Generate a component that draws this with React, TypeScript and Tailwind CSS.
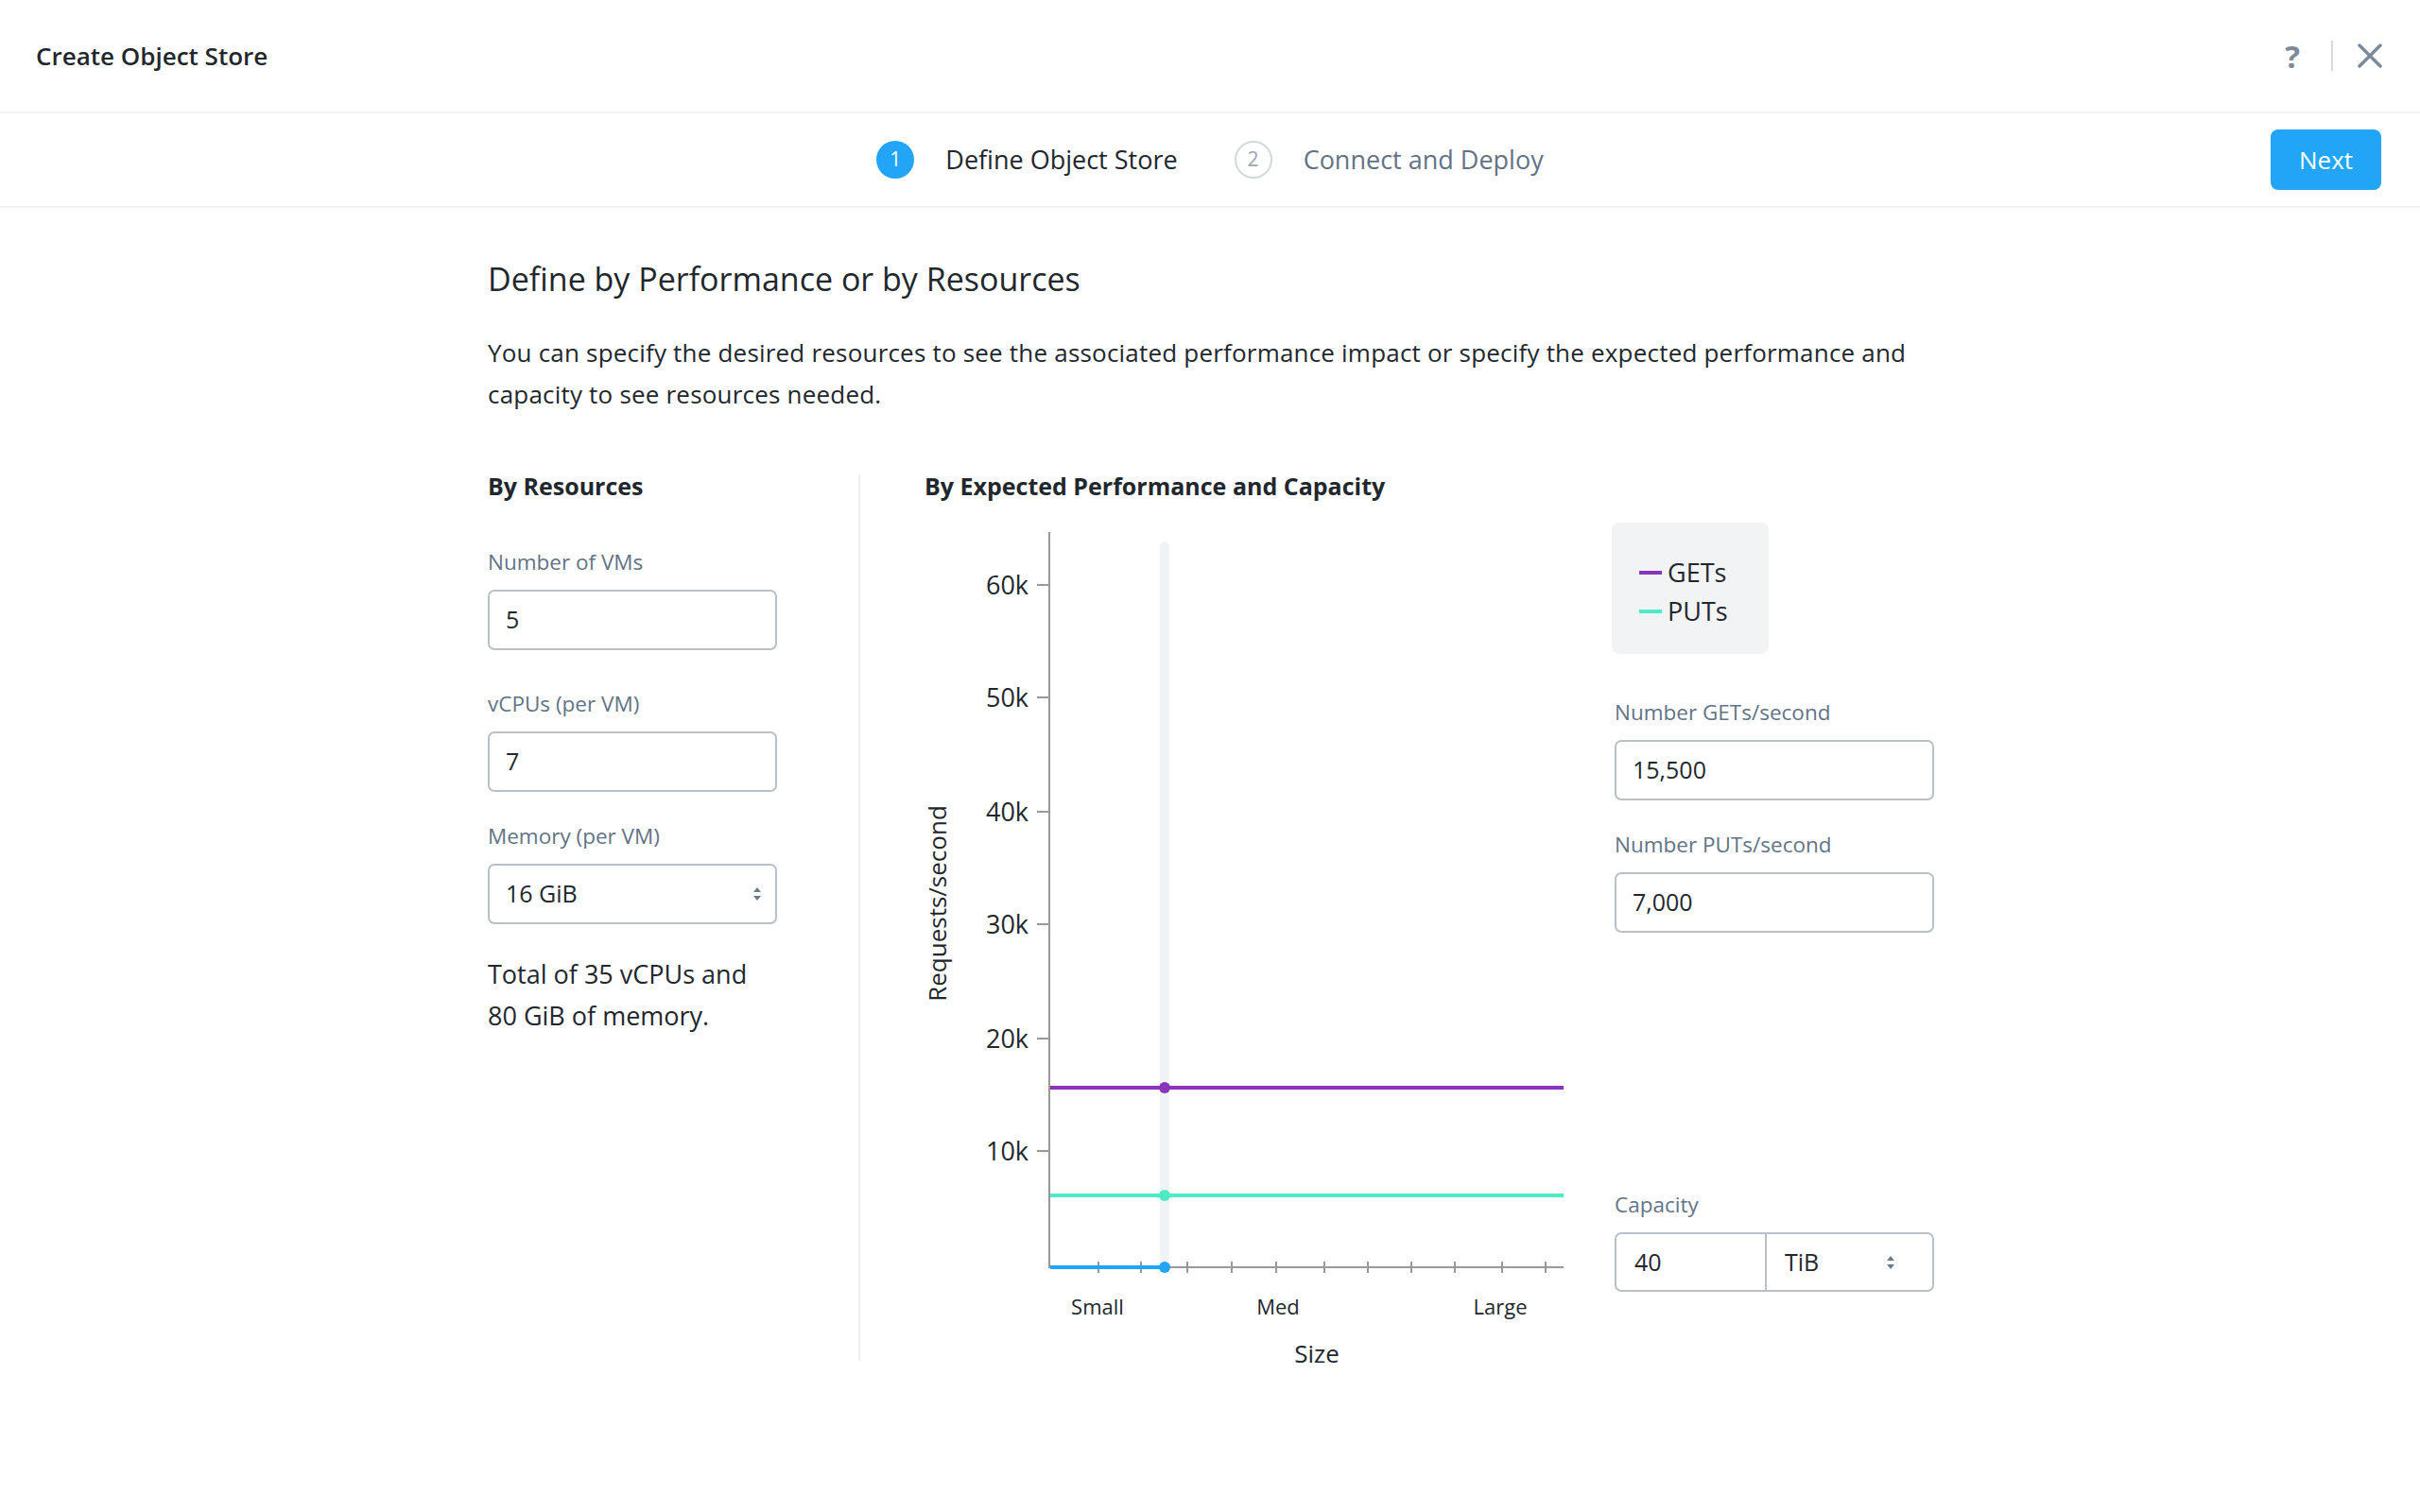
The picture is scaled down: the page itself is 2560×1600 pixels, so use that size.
import React from 'react';

const ticksY = [
  { label: '60k', y: 78 },
  { label: '50k', y: 197 },
  { label: '40k', y: 318 },
  { label: '30k', y: 437 },
  { label: '20k', y: 558 },
  { label: '10k', y: 677 },
];

const ticksX = [184, 229, 278, 325, 372, 423, 469, 515, 561, 611, 657];

function SelectArrows() {
  return (
    <svg width="10" height="16" viewBox="0 0 10 16" className="flex-none">
      <path d="M5 1 L9 6 L1 6 Z" fill="#6b7a8c" />
      <path d="M5 15 L9 10 L1 10 Z" fill="#6b7a8c" />
    </svg>
  );
}

function Field({ label, value, className = '' }: { label: string; value: string; className?: string }) {
  return (
    <div className={className}>
      <div className="text-[22.5px] leading-[30px] text-[#627386]">{label}</div>
      <div className="mt-[14px] flex h-[64px] items-center rounded-[7px] border-2 border-[#b9c0cc] px-[17px] text-[25px]">
        {value}
      </div>
    </div>
  );
}

function Chart() {
  return (
    <svg
      width="730"
      height="920"
      viewBox="0 0 730 920"
      className="flex-none overflow-visible"
      fontFamily="'Open Sans', sans-serif"
    >
      {/* highlight band */}
      <rect x="249" y="32" width="10" height="770" rx="5" fill="#f2f3f5" />

      {/* y axis */}
      <line x1="132" y1="22" x2="132" y2="801" stroke="#999999" strokeWidth="2" />
      {ticksY.map((t) => (
        <g key={t.label}>
          <line x1="119" y1={t.y} x2="132" y2={t.y} stroke="#999999" strokeWidth="2" />
          <text x="110" y={t.y + 10} textAnchor="end" fontSize="27" fill="#22272e">
            {t.label}
          </text>
        </g>
      ))}
      <text
        x="0"
        y="0"
        transform="translate(23 415) rotate(-90)"
        textAnchor="middle"
        fontSize="26"
        fill="#22272e"
      >
        Requests/second
      </text>

      {/* x axis */}
      <line x1="132" y1="800" x2="676" y2="800" stroke="#999999" strokeWidth="2" />
      {ticksX.map((x) => (
        <line key={x} x1={x} y1="794" x2={x} y2="806" stroke="#999999" strokeWidth="2" />
      ))}
      <text x="183" y="850" textAnchor="middle" fontSize="22" fill="#22272e">Small</text>
      <text x="374" y="850" textAnchor="middle" fontSize="22" fill="#22272e">Med</text>
      <text x="609" y="850" textAnchor="middle" fontSize="22" fill="#22272e">Large</text>
      <text x="415" y="901" textAnchor="middle" fontSize="26" fill="#22272e">Size</text>

      {/* series */}
      <line x1="133" y1="610" x2="676" y2="610" stroke="#8a33bd" strokeWidth="4" />
      <line x1="133" y1="724" x2="676" y2="724" stroke="#4cebc6" strokeWidth="4" />
      <line x1="133" y1="800" x2="254" y2="800" stroke="#1fa6fa" strokeWidth="4" />
      <circle cx="254" cy="610" r="6" fill="#8a33bd" />
      <circle cx="254" cy="724" r="6" fill="#4cebc6" />
      <circle cx="254" cy="800" r="6" fill="#1fa6fa" />
    </svg>
  );
}

export default function App() {
  return (
    <div className="min-h-screen w-full bg-white font-['Open_Sans',sans-serif] text-[#22272e]">
      {/* Header */}
      <div className="flex h-[120px] items-center justify-between border-b-2 border-[#f2f2f2] pl-[38px] pr-[40px]">
        <div className="text-[26px] font-semibold">Create Object Store</div>
        <div className="flex items-center">
          <span className="text-[33px] font-bold leading-none text-[#7c8a9a]">?</span>
          <div className="ml-[33px] mr-[26px] h-[32px] w-[2px] bg-[#d8dce2]" />
          <svg width="26" height="26" viewBox="0 0 26 26">
            <path d="M2 2 L24 24 M24 2 L2 24" stroke="#7c8a9a" strokeWidth="3.5" strokeLinecap="round" />
          </svg>
        </div>
      </div>

      {/* Steps */}
      <div className="grid h-[100px] grid-cols-[1fr_auto_1fr] items-center border-b-2 border-[#f2f2f2]">
        <div />
        <div className="flex items-center">
          <div className="flex h-[40px] w-[40px] items-center justify-center rounded-full bg-[#22a5f7] text-[21px] text-white">1</div>
          <div className="ml-[33px] text-[27px]">Define Object Store</div>
          <div className="ml-[60px] flex h-[40px] w-[40px] items-center justify-center rounded-full border-2 border-[#d3d8df] text-[21px] text-[#9aa5b4]">2</div>
          <div className="ml-[33px] text-[27px] text-[#627386]">Connect and Deploy</div>
        </div>
        <div className="flex justify-end pr-[41px]">
          <button className="h-[64px] w-[117px] rounded-[8px] bg-[#22a5f7] text-[26px] text-white">Next</button>
        </div>
      </div>

      {/* Content */}
      <div className="pl-[516px] pt-[55px]">
        <h1 className="text-[34px] font-normal leading-[40px]">Define by Performance or by Resources</h1>
        <p className="mt-[36px] w-[1540px] text-[26px] leading-[44px] tracking-[0.2px]">
          You can specify the desired resources to see the associated performance impact or specify the expected performance and capacity to see resources needed.
        </p>

        <div className="mt-[57px] flex">
          {/* By Resources */}
          <div className="w-[392px] flex-none">
            <div className="text-[25px] font-bold leading-[36px]">By Resources</div>
            <Field label="Number of VMs" value="5" className="mt-[48px] w-[306px]" />
            <Field label="vCPUs (per VM)" value="7" className="mt-[42px] w-[306px]" />
            <div className="mt-[32px] w-[306px]">
              <div className="text-[22.5px] leading-[30px] text-[#627386]">Memory (per VM)</div>
              <div className="mt-[14px] flex h-[64px] items-center justify-between rounded-[7px] border-2 border-[#b9c0cc] pl-[17px] pr-[14px] text-[25px]">
                16 GiB
                <SelectArrows />
              </div>
            </div>
            <p className="mt-[31px] text-[27px] leading-[44px]">
              Total of 35 vCPUs and
              <br />
              80 GiB of memory.
            </p>
          </div>

          <div className="mt-[6px] h-[938px] w-[2px] flex-none bg-[#f0f0f0]" />

          {/* By Expected Performance */}
          <div className="pl-[68px]">
            <div className="text-[25px] font-bold leading-[36px]">By Expected Performance and Capacity</div>
            <div className="mt-[9px] flex">
              <Chart />
              <div className="w-[338px] flex-none">
                <div className="-ml-[3px] mt-[12px] w-[166px] rounded-[8px] bg-[#f2f3f5] pb-[25px] pl-[29px] pt-[32px] text-[27px] leading-[41px]">
                  <div className="flex items-center">
                    <span className="mr-[6px] h-[4px] w-[24px] bg-[#8a33bd]" />
                    GETs
                  </div>
                  <div className="flex items-center">
                    <span className="mr-[6px] h-[4px] w-[24px] bg-[#4cebc6]" />
                    PUTs
                  </div>
                </div>
                <Field label="Number GETs/second" value="15,500" className="mt-[47px]" />
                <Field label="Number PUTs/second" value="7,000" className="mt-[32px]" />
                <div className="mt-[273px]">
                  <div className="text-[22.5px] leading-[30px] text-[#627386]">Capacity</div>
                  <div className="mt-[14px] flex h-[63px] rounded-[7px] border-2 border-[#b9c0cc] text-[25px]">
                    <div className="flex w-[159px] items-center border-r-2 border-[#b9c0cc] pl-[19px]">40</div>
                    <div className="flex flex-1 items-center justify-between pl-[19px] pr-[39px]">
                      TiB
                      <SelectArrows />
                    </div>
                  </div>
                </div>
              </div>
            </div>
          </div>
        </div>
      </div>
    </div>
  );
}
